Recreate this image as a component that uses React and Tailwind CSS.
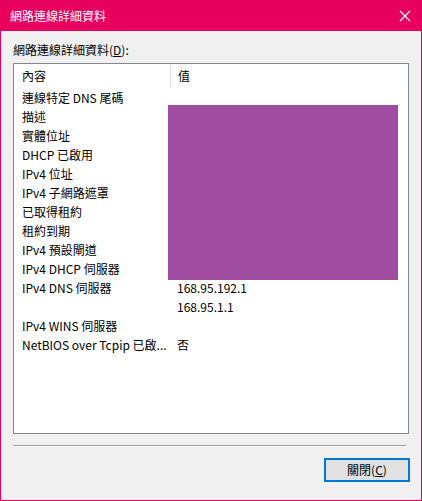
import React from 'react';

const rows = [
  ['連線特定 DNS 尾碼', ''],
  ['描述', ''],
  ['實體位址', ''],
  ['DHCP 已啟用', ''],
  ['IPv4 位址', ''],
  ['IPv4 子網路遮罩', ''],
  ['已取得租約', ''],
  ['租約到期', ''],
  ['IPv4 預設閘道', ''],
  ['IPv4 DHCP 伺服器', ''],
  ['IPv4 DNS 伺服器', '168.95.192.1'],
  ['', '168.95.1.1'],
  ['IPv4 WINS 伺服器', ''],
  ['NetBIOS over Tcpip 已啟...', '否'],
];

const font = { fontFamily: '"Noto Sans CJK TC", "Noto Sans", sans-serif' };

const App = () => {
  return (
    <div
      className="w-[422px] h-[501px] flex flex-col bg-[#f0f0f0] border border-[#e8005f] text-[12px] text-black"
      style={font}
    >
      <div className="h-[30px] shrink-0 bg-[#e8005f] flex items-center justify-between pl-[9px] pr-[8px] text-white">
        <span className="text-[12px]">網路連線詳細資料</span>
        <svg width="12" height="12" viewBox="0 0 12 12" className="mr-[2px]">
          <path d="M1 1 L11 11 M11 1 L1 11" stroke="white" strokeWidth="1.2" />
        </svg>
      </div>

      <div className="flex flex-col px-[12px]">
        <div className="h-[17px] mt-[10px] leading-[17px]">
          網路連線詳細資料(<span className="underline">D</span>):
        </div>
        <div className="relative mt-[5px] w-[396px] h-[371px] bg-white border border-[#828790]">
          <div className="flex h-[24px] items-center">
            <div className="w-[156px] pl-[8px]">內容</div>
            <div className="w-px h-[24px] bg-[#e5e5e5]" />
            <div className="pl-[7px]">值</div>
          </div>
          {rows.map(([k, v], i) => (
            <div key={i} className="flex h-[19px] items-center leading-[19px]">
              <div className="w-[163px] pl-[8px] whitespace-nowrap">{k}</div>
              <div className="whitespace-nowrap">{v}</div>
            </div>
          ))}
          <div className="absolute left-[154px] top-[41px] w-[230px] h-[175px] bg-[#a04ca0]" />
        </div>
        <div className="mt-[11px] w-[393px] h-[2px] border-t border-[#a0a0a0] border-b border-b-white" />
        <div className="flex justify-end mt-[11px]">
          <div className="w-[86px] h-[24px] border-2 border-[#0078d7] bg-[#e1e1e1] flex items-center justify-center -mr-[1px]">
            關閉(<span className="underline">C</span>)
          </div>
        </div>
      </div>
    </div>
  );
};

export default App;
